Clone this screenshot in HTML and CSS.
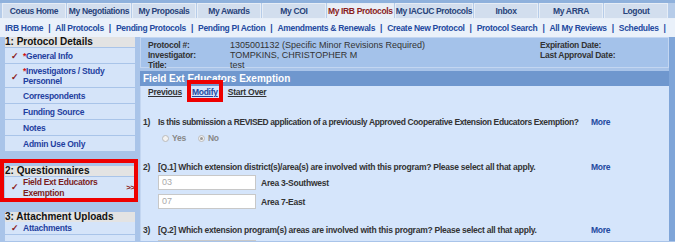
FILE: index.html
```html
<!DOCTYPE html>
<html>
<head>
<meta charset="utf-8">
<link rel="stylesheet" href="styles.css">
</head>
<body>
<div class="topnav">
  <div class="tab">Coeus Home</div>
  <div class="tab">My Negotiations</div>
  <div class="tab">My Proposals</div>
  <div class="tab">My Awards</div>
  <div class="tab">My COI</div>
  <div class="tab active">My IRB Protocols</div>
  <div class="tab">My IACUC Protocols</div>
  <div class="tab">Inbox</div>
  <div class="tab">My ARRA</div>
  <div class="tab">Logout</div>
</div>
<div class="subnav">
  <a>IRB Home</a><span class="sep">|</span>
  <a>All Protocols</a><span class="sep">|</span>
  <a>Pending Protocols</a><span class="sep">|</span>
  <a>Pending PI Action</a><span class="sep">|</span>
  <a>Amendments &amp; Renewals</a><span class="sep">|</span>
  <a>Create New Protocol</a><span class="sep">|</span>
  <a>Protocol Search</a><span class="sep">|</span>
  <a>All My Reviews</a><span class="sep">|</span>
  <a>Schedules</a><span class="sep">|</span>
</div>
<div class="layout">
  <div class="sidebar">
    <div class="sec-head">1: Protocol Details</div>
    <div class="item"><span class="check">✓</span><span class="label"><span class="req">*</span>General Info</span></div>
    <div class="item two"><span class="check">✓</span><span class="label"><span class="req">*</span>Investigators / Study<br>Personnel</span></div>
    <div class="item"><span class="check"></span><span class="label">Correspondents</span></div>
    <div class="item"><span class="check"></span><span class="label">Funding Source</span></div>
    <div class="item"><span class="check"></span><span class="label">Notes</span></div>
    <div class="item"><span class="check"></span><span class="label">Admin Use Only</span></div>
    <div class="sec-group highlighted">
      <div class="sec-head">2: Questionnaires</div>
      <div class="item two current"><span class="check">✓</span><span class="label">Field Ext Educators<br>Exemption</span><span class="arrows">&gt;&gt;</span></div>
    </div>
    <div class="sec-head sec3">3: Attachment Uploads</div>
    <div class="item att"><span class="check">✓</span><span class="label">Attachments</span></div>
    <div class="item"></div>
  </div>
  <div class="main">
    <div class="protobox">
      <div class="pcol">
        <div class="prow"><span class="pk">Protocol #:</span><span class="pv">1305001132 (Specific Minor Revisions Required)</span></div>
        <div class="prow"><span class="pk">Investigator:</span><span class="pv">TOMPKINS, CHRISTOPHER M</span></div>
        <div class="prow"><span class="pk">Title:</span><span class="pv">test</span></div>
      </div>
      <div class="pcol right">
        <div class="prow"><span class="pk">Expiration Date:</span></div>
        <div class="prow"><span class="pk">Last Approval Date:</span></div>
      </div>
    </div>
    <div class="qhead">Field Ext Educators Exemption</div>
    <div class="qbody">
      <div class="links">
        <a class="lnk">Previous</a>
        <a class="lnk modify">Modify</a>
        <a class="lnk">Start Over</a>
      </div>
      <div class="q q1">
        <span class="qn">1)</span><span class="qt">Is this submission a REVISED application of a previously Approved Cooperative Extension Educators Exemption?</span><span class="more">More</span>
      </div>
      <div class="radios">
        <span class="radio"></span><span class="rl">Yes</span>
        <span class="radio checked"></span><span class="rl">No</span>
      </div>
      <div class="q q2">
        <span class="qn">2)</span><span class="qt">[Q.1] Which extension district(s)/area(s) are involved with this program? Please select all that apply.</span><span class="more">More</span>
      </div>
      <div class="ans a1"><span class="box">03</span><span class="al">Area 3-Southwest</span></div>
      <div class="ans a2"><span class="box">07</span><span class="al">Area 7-East</span></div>
      <div class="q q3">
        <span class="qn">3)</span><span class="qt">[Q.2] Which extension program(s) areas are involved with this program? Please select all that apply.</span><span class="more">More</span>
      </div>
      <div class="ans a3"><span class="box"></span></div>
    </div>
  </div>
  <div class="rstrip"></div>
</div>
</body>
</html>
```

FILE: styles.css
```css
* { box-sizing: border-box; }
html, body { margin: 0; padding: 0; }
body {
  width: 675px;
  height: 242px;
  overflow: hidden;
  background: #a9c4e9;
  font-family: "Liberation Sans", Arial, sans-serif;
  font-size: 9px;
  color: #333;
}
.topnav {
  display: flex;
  gap: 1px;
  padding: 3px 7px 0 2px;
  height: 19px;
  background: linear-gradient(#8fb1dc 0, #8fb1dc 3px, #b6cce9 3px);
  border-bottom: 1px solid #e8eff8;
}
.tab {
  flex: 1;
  height: 15px;
  display: flex;
  align-items: center;
  justify-content: center;
  background: #d2deee;
  border: 1px solid #e6edf6;
  border-bottom: none;
  font-weight: bold;
  font-size: 8.5px;
  color: #28437a;
  white-space: nowrap;
  letter-spacing: -0.35px;
}
.tab.active {
  background: #e9eef6;
  color: #8a1c1c;
}
.subnav {
  height: 18px;
  background: #eaf1fa;
  display: flex;
  align-items: center;
  padding-left: 5px;
  font-weight: bold;
  font-size: 8.5px;
  letter-spacing: -0.3px;
  color: #2349a0;
  white-space: nowrap;
}
.subnav .sep { margin: 0 5px 0 5px; color: #2349a0; }
.layout {
  display: flex;
  height: 204px;
  overflow: hidden;
}
.sidebar {
  width: 140px;
  padding: 0 5px 0 5px;
  display: flex;
  flex-direction: column;
  background: #a9c4e9;
}
.sidebar > * { flex: none; }
.sec-head {
  background: #e3e3e3;
  height: 10px;
  line-height: 10px;
  font-weight: bold;
  font-size: 10px;
  color: #111;
  margin-bottom: 1px;
  white-space: nowrap;
}
.item {
  background: #d5e4f9;
  height: 15px;
  flex: none;
  display: flex;
  align-items: center;
  margin-bottom: 1px;
  font-weight: bold;
  font-size: 8.5px;
  letter-spacing: -0.25px;
  color: #1f3fa0;
  position: relative;
  white-space: nowrap;
}
.item.two { height: 23px; line-height: 10px; align-items: flex-start; padding-top: 2px; }
.check {
  width: 18px;
  flex: none;
  align-self: center;
  color: #8b1a1a;
  font-size: 9px;
  text-align: center;
  padding-left: 2px;
}
.req { color: #d01010; }
.label { flex: 1; }
.sec-group {
  margin-top: 14px;
  position: relative;
}
.highlighted::after {
  content: "";
  position: absolute;
  left: -5px;
  right: -3px;
  top: -7px;
  bottom: -4px;
  border: 4px solid #ee0000;
  pointer-events: none;
}
.item.current { color: #7b1d1d; height: 21px; padding-top: 0; margin-bottom: 0; line-height: 10.5px; }
.arrows {
  position: absolute;
  right: 0;
  top: 6px;
  font-size: 8px;
  color: #8b1a1a;
  font-weight: bold;
}
.sec3 { margin-top: 14px; margin-bottom: 0; }
.item.att { height: 12px; }
.main {
  width: 529px;
  display: flex;
  flex-direction: column;
}
.protobox {
  height: 31px;
  flex: none;
  background: #a4c2ea;
  border: 1px solid #c3d6f1;
  display: flex;
  padding: 2px 0 0 7px;
  font-size: 9px;
  color: #333;
}
.pcol { flex: 1; }
.pcol.right { flex: none; width: 128px; }
.prow { height: 10px; line-height: 10px; display: flex; }
.pk { width: 82px; flex: none; font-weight: bold; font-size: 8.5px; letter-spacing: -0.25px; }
.pcol.right .pk { width: auto; }
.pv { white-space: nowrap; }
.qhead {
  margin-top: 3px;
  height: 15px;
  flex: none;
  background: #6f97ce;
  color: #fff;
  font-weight: bold;
  font-size: 10px;
  line-height: 15px;
  padding-left: 3px;
  margin-right: -1px;
}
.qbody {
  flex: 1;
  background: #d5e5fb;
  border-left: 1px solid #c3d6f1;
  padding-left: 2px;
}
.links {
  display: flex;
  gap: 10px;
  padding: 0 0 0 5px;
  height: 12px;
  align-items: center;
}
.lnk {
  font-weight: bold;
  color: #333;
  text-decoration: underline;
  font-size: 8.5px;
  letter-spacing: -0.25px;
  position: relative;
}
.lnk.modify { color: #2349a0; }
.lnk.modify::after {
  content: "";
  position: absolute;
  left: -5px;
  right: -5px;
  top: -7px;
  bottom: -5px;
  border: 4px solid #ee0000;
}
.q {
  display: flex;
  font-weight: bold;
  font-size: 8.5px;
  letter-spacing: -0.25px;
  color: #333;
  height: 11px;
  line-height: 11px;
}
.q1 .qt { letter-spacing: -0.38px; }
.q1 { margin-top: 19px; }
.q2 { margin-top: 19px; }
.q3 { margin-top: 16px; }
.qn { width: 15px; flex: none; }
.qt { width: 433px; flex: none; white-space: nowrap; overflow: hidden; }
.more { color: #2349a0; }
.radios {
  display: flex;
  align-items: center;
  height: 10px;
  margin-top: 5px;
  padding-left: 19px;
  color: #888;
  font-weight: bold;
  font-size: 8.5px;
  letter-spacing: -0.25px;
}
.radio {
  width: 7px;
  height: 7px;
  border-radius: 50%;
  border: 1px solid #bbb;
  background: #f2f2f2;
  margin-right: 3px;
  position: relative;
}
.radio.checked::after {
  content: "";
  position: absolute;
  left: 1px;
  top: 1px;
  width: 3px;
  height: 3px;
  border-radius: 50%;
  background: #999;
}
.rl { margin-right: 12px; }
.ans {
  display: flex;
  align-items: center;
  padding-left: 15px;
  height: 15px;
}
.a1 { margin-top: 2px; }
.a2 { margin-top: 4px; }
.a3 { margin-top: 4px; }
.box {
  width: 98px;
  height: 15px;
  background: #fff;
  border: 1px solid #c8c8c8;
  color: #aaa;
  font-size: 9px;
  line-height: 13px;
  padding-left: 3px;
  margin-right: 5px;
}
.al { font-weight: bold; font-size: 8.5px; letter-spacing: -0.25px; color: #333; }
.rstrip {
  width: 6px;
  background: #7fa5d8;
}
```
